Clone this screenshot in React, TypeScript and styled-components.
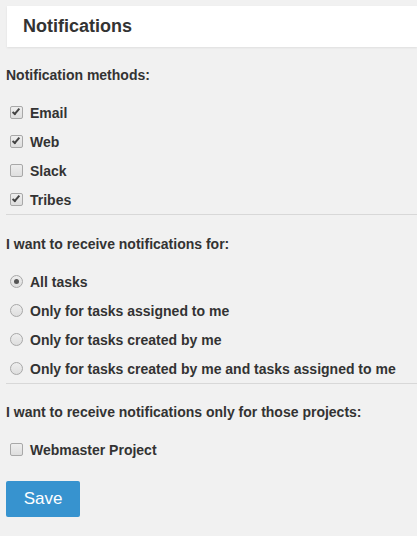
import styled, { createGlobalStyle } from "styled-components";

const GlobalStyle = createGlobalStyle`
  html, body {
    margin: 0;
    padding: 0;
    background: #f1f1f1;
  }
  body {
    font-family: "Liberation Sans", Arial, sans-serif;
    color: #333;
  }
`;

const Page = styled.div`
  padding: 6px 0 20px 6px;
`;

const Header = styled.div`
  margin-left: 1px;
  height: 41px;
  background: #fff;
  box-shadow: 0 1px 2px rgba(0, 0, 0, 0.08);
  display: flex;
  align-items: center;
  padding-left: 16px;
`;

const Title = styled.h1`
  margin: 0;
  font-size: 18px;
  font-weight: bold;
  color: #333;
`;

const Heading = styled.div<{ $gap?: number }>`
  margin-top: ${(p) => p.$gap ?? 19}px;
  line-height: 18px;
  font-size: 14px;
  font-weight: bold;
`;

const OptionList = styled.div`
  margin-top: 14px;
  display: flex;
  flex-direction: column;
`;

const Option = styled.label`
  height: 29px;
  display: flex;
  align-items: center;
  gap: 7px;
  padding-left: 4px;
  font-size: 14px;
  font-weight: bold;
  cursor: pointer;
`;

const Box = styled.input`
  appearance: none;
  margin: 0;
  width: 13px;
  height: 13px;
  flex: none;
  border: 1px solid #a8a8a8;
  background: linear-gradient(#eeeeee, #dedede);
  position: relative;
  border-radius: ${(p) => (p.type === "radio" ? "50%" : "2px")};

  &:checked::after {
    content: "";
    position: absolute;
    box-sizing: border-box;
  }

  &[type="checkbox"]:checked::after {
    left: 3px;
    top: 0px;
    width: 4px;
    height: 8px;
    border: solid #444;
    border-width: 0 2px 2px 0;
    transform: rotate(40deg);
  }

  &[type="radio"]:checked::after {
    left: 3px;
    top: 3px;
    width: 5px;
    height: 5px;
    border-radius: 50%;
    background: #555;
  }
`;

const Divider = styled.hr`
  margin: 0;
  border: none;
  border-top: 1px solid #d8d8d8;
`;

const SaveButton = styled.button`
  margin-top: 17px;
  width: 74px;
  height: 36px;
  border: none;
  border-radius: 2px;
  background: #3793cf;
  color: #fff;
  font-family: "Liberation Sans", Arial, sans-serif;
  font-size: 17px;
  cursor: pointer;
`;

const methods = [
  { name: "Email", checked: true },
  { name: "Web", checked: true },
  { name: "Slack", checked: false },
  { name: "Tribes", checked: true },
];

const scopes = [
  "All tasks",
  "Only for tasks assigned to me",
  "Only for tasks created by me",
  "Only for tasks created by me and tasks assigned to me",
];

export default function App() {
  return (
    <Page>
      <GlobalStyle />
      <Header>
        <Title>Notifications</Title>
      </Header>

      <Heading>Notification methods:</Heading>
      <OptionList>
        {methods.map((m) => (
          <Option key={m.name}>
            <Box type="checkbox" defaultChecked={m.checked} />
            {m.name}
          </Option>
        ))}
      </OptionList>
      <Divider />

      <Heading $gap={20}>I want to receive notifications for:</Heading>
      <OptionList>
        {scopes.map((s, i) => (
          <Option key={s}>
            <Box type="radio" name="scope" defaultChecked={i === 0} />
            {s}
          </Option>
        ))}
      </OptionList>
      <Divider />

      <Heading $gap={19}>
        I want to receive notifications only for those projects:
      </Heading>
      <OptionList>
        <Option>
          <Box type="checkbox" />
          Webmaster Project
        </Option>
      </OptionList>

      <SaveButton>Save</SaveButton>
    </Page>
  );
}
